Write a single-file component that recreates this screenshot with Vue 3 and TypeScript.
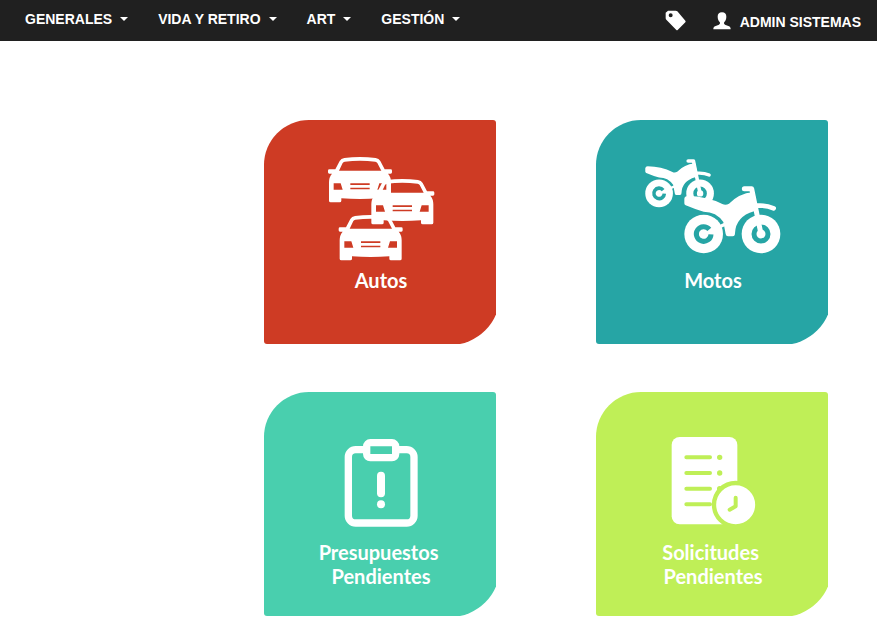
<script setup lang="ts">
type CardKind = 'autos' | 'motos' | 'presupuestos' | 'solicitudes'

interface Card {
  kind: CardKind
  label: string
  viewBox: string
}

const menus: string[] = ['GENERALES', 'VIDA Y RETIRO', 'ART', 'GESTIÓN']

const cards: Card[] = [
  { kind: 'autos', label: 'Autos', viewBox: '-27 21 420 336' },
  { kind: 'motos', label: 'Motos', viewBox: '24 6 420 336' },
  { kind: 'presupuestos', label: 'Presupuestos \nPendientes', viewBox: '3 -18 420 336' },
  { kind: 'solicitudes', label: 'Solicitudes \nPendientes', viewBox: '-21 -18 420 336' },
]

const carTransforms: string[] = ['translate(24 36)', 'translate(151 102)', 'translate(56 210)']
const bikeTransforms: string[] = ['translate(-75 -50) scale(.715)', 'translate(0 0)']

const carPath =
  'M22 37L35 12Q39 4 49 3Q96 -3 143 3Q153 4 157 12L170 37H188Q192 37 192 41V46Q192 50 188 50H180Q189 60 189 76V131Q189 136 184 136H157Q152 136 152 131V124Q96 128 40 124V131Q40 136 35 136H8Q3 136 3 131V76Q3 60 12 50H4Q0 50 0 46V41Q0 37 4 37Z' +
  'M33 41H160L148 18Q146 15 142 14Q96 9 50 14Q46 15 44 18Z' +
  'M17 79V98H44L38 79ZM175 79V98H148L154 79Z' +
  'M67 79V84H125V79ZM67 92V97H125V92Z'
</script>

<template>
  <header class="navbar">
    <nav class="menus" aria-label="Principal">
      <button v-for="menu in menus" :key="menu" type="button" class="menu">
        {{ menu }}<span class="caret"></span>
      </button>
    </nav>
    <div class="account">
      <a href="#" class="tag" aria-label="Etiquetas">
        <svg viewBox="0 0 63 63" width="21" height="21" aria-hidden="true">
          <path
            fill="currentColor"
            fill-rule="evenodd"
            d="M2 8L9 2H32Q35 2 37 4L61 32Q63 34 61 37L38 60Q36 62 34 60L4 29Q2 27 2 24ZM17 10A6 6 0 1 0 17 22A6 6 0 1 0 17 10Z"
          />
        </svg>
      </a>
      <a href="#" class="user">
        <svg viewBox="0 0 54 54" width="18" height="18" aria-hidden="true">
          <path
            fill="currentColor"
            d="M27 1C36 1 40 6 40 14C40 22 37 27 34 30C32 33 33 36 36 38L48 43C52 45 53 47 53 52H1C1 47 2 45 6 43L18 38C21 36 22 33 20 30C17 27 14 22 14 14C14 6 18 1 27 1Z"
          />
        </svg>
        <span>ADMIN SISTEMAS</span>
      </a>
    </div>
  </header>

  <main class="cards">
    <a v-for="card in cards" :key="card.kind" href="#" class="card" :class="card.kind">
      <svg class="icon" :viewBox="card.viewBox" aria-hidden="true">
        <g v-if="card.kind === 'autos'" fill="#fff" fill-rule="evenodd">
          <path v-for="t in carTransforms" :key="t" :d="carPath" :transform="t" />
        </g>

        <template v-else-if="card.kind === 'motos'">
          <g v-for="t in bikeTransforms" :key="t" :transform="t">
            <circle class="solid" cx="206" cy="252" r="58" />
            <circle class="solid" cx="378" cy="252" r="58" />
            <path class="cut" stroke-width="15" d="M223 238A22 22 0 1 0 228 253" />
            <circle class="cut" cx="378" cy="252" r="21" stroke-width="15" />
            <path
              class="solid"
              d="M148 146Q149 138 158 138Q216 139 262 162Q272 167 282 161Q314 130 352 127L358 127L368 180L357 184Q302 200 300 250Q300 259 293 259H279Q273 259 272 252L265 216Q244 185 206 185Q180 178 152 166Q148 164 148 160Z"
            />
            <path class="line" stroke-width="10" d="M254 230L272 222" />
            <path class="line" stroke-width="15" stroke-linecap="round" stroke-linejoin="round" d="M328 116H350L378 252" />
            <path class="line" stroke-width="14" stroke-linecap="round" d="M366 167Q394 165 416 175" />
          </g>
        </template>

        <g v-else-if="card.kind === 'presupuestos'">
          <rect class="line" x="115" y="59" width="197" height="220" rx="22" stroke-width="22" />
          <rect class="line backed" x="170" y="38" width="87" height="45" rx="11" stroke-width="22" />
          <path class="line" stroke-width="24" stroke-linecap="round" d="M213 137V190" />
          <circle class="solid" cx="213" cy="223" r="12" />
        </g>

        <g v-else>
          <rect class="solid" x="65" y="21" width="197" height="262" rx="24" />
          <path class="cut" stroke-width="12" stroke-linecap="round" d="M109 82H180M109 129H180M109 176H180M109 223H180" />
          <path class="cut" stroke-width="16" stroke-linecap="round" d="M209 82h.1M209 129h.1M209 176h.1" />
          <circle class="solid cut-edge" cx="257" cy="224" r="65" stroke-width="13" />
          <path class="cut" stroke-width="12" stroke-linecap="round" stroke-linejoin="round" d="M257 203V229L239 239" />
        </g>
      </svg>
      <span class="label">{{ card.label }}</span>
    </a>
  </main>
</template>

<style>
body {
  margin: 0;
  background: #fff;
}
</style>

<style scoped>
.navbar {
  display: flex;
  justify-content: space-between;
  padding: 0 16px 0 25px;
  background: #202020;
  color: #fff;
  font: bold 14px/20px 'Liberation Sans', Arial, sans-serif;
}

.menus {
  display: flex;
  gap: 30px;
  padding: 9px 0 12px;
}

.menu {
  display: flex;
  align-items: center;
  gap: 8px;
  padding: 0;
  border: 0;
  background: none;
  color: inherit;
  font: inherit;
  white-space: nowrap;
  cursor: pointer;
}

.caret {
  border: 4px solid transparent;
  border-top-color: currentColor;
  border-bottom: 0;
}

.account {
  display: flex;
  align-items: flex-start;
  gap: 27px;
}

.account a {
  color: inherit;
  text-decoration: none;
}

.account svg {
  display: block;
}

.tag {
  padding-top: 10px;
}

.user {
  display: flex;
  gap: 9px;
  padding-top: 12px;
  white-space: nowrap;
}

.cards {
  display: grid;
  grid-template-columns: repeat(auto-fill, minmax(232px, 1fr));
  gap: 48px 100px;
  padding: 79px 49px 12px 264px;
}

.card {
  position: relative;
  z-index: 0;
  display: flex;
  flex-direction: column;
  align-items: center;
  gap: 4px;
  box-sizing: border-box;
  min-height: 224px;
  padding: 32px 0 24px 2px;
  overflow: hidden;
  border-radius: 0 3px 0 3px;
  color: #fff;
  text-decoration: none;
}

/* The coloured leaf runs past the right and bottom edges, which trim its curve. */
.card::before {
  content: '';
  position: absolute;
  z-index: -1;
  inset: 0 -4px -1px 0;
  border-radius: 45px 0 50px 0;
  background: var(--tone);
}

.autos {
  --tone: #ce3b24;
}

.motos {
  --tone: #26a5a5;
}

.presupuestos {
  --tone: #49cfae;
}

.solicitudes {
  --tone: #bfef57;
}

.icon {
  display: block;
  width: 140px;
  height: 112px;
}

.solid {
  fill: #fff;
}

.line {
  fill: none;
  stroke: #fff;
}

.backed {
  fill: var(--tone);
}

.cut {
  fill: none;
  stroke: var(--tone);
}

.cut-edge {
  stroke: var(--tone);
}

.label {
  font: bold 20px/24px Lato, sans-serif;
  text-align: center;
  white-space: pre;
}
</style>
